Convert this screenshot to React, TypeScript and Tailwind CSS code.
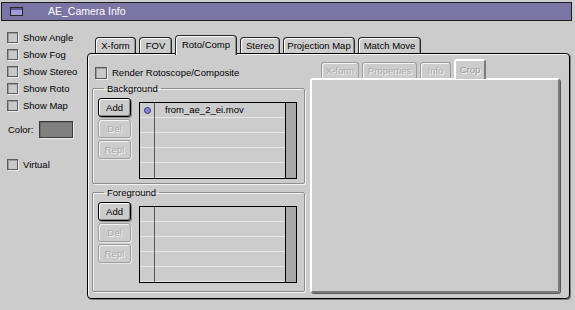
import React from "react";

function Box({ size = 11 }: { size?: number }) {
  return (
    <span
      className={
        (size === 12 ? "w-[12px] h-[12px] " : "w-[11px] h-[11px] ") +
        "shrink-0 border border-[#5c5c5c] bg-[#c9c9c9] shadow-[inset_1px_1px_0_#9c9c9c,1px_1px_0_#efefef]"
      }
    />
  );
}

function SideRow({ label }: { label: string }) {
  return (
    <div className="h-[17px] flex items-center">
      <Box />
      <span className="ml-[5px]">{label}</span>
    </div>
  );
}

function Tab({ label, w, active }: { label: string; w: string; active?: boolean }) {
  return (
    <div
      className={
        w +
        " border border-b-0 border-[#262626] rounded-t-[4px] shadow-[inset_1px_1px_0_#ffffff,inset_-1px_0_0_#8c8c8c] flex items-center justify-center " +
        (active ? "relative z-10 h-[20px] bg-[#cccccc] pb-[2px]" : "h-[16px] mb-[2px]")
      }
    >
      {label}
    </div>
  );
}

function SubTab({ label, w, active }: { label: string; w: string; active?: boolean }) {
  return (
    <div
      className={
        w +
        " rounded-t-[3px] flex items-center justify-center [text-shadow:1px_1px_0_#f2f2f2] " +
        (active
          ? "relative z-10 h-[20px] bg-[#cccccc] border-2 border-b-0 border-t-white border-l-white border-r-[#7a7a7a] text-[#9a9a9a] pb-[1px]"
          : "h-[16px] mb-[1px] border border-b-0 border-[#9c9c9c] shadow-[inset_1px_1px_0_#f4f4f4] text-[#adadad]")
      }
    >
      {label}
    </div>
  );
}

function Btn({ label, disabled }: { label: string; disabled?: boolean }) {
  return (
    <div
      className={
        "h-[19px] w-[33px] rounded-[3px] border flex items-center justify-center " +
        (disabled
          ? "border-[#9e9e9e] text-[#a9a9a9] [text-shadow:1px_1px_0_#f4f4f4] shadow-[inset_1px_1px_0_#f2f2f2,1px_1px_0_#e8e8e8]"
          : "border-black shadow-[inset_1px_1px_0_#ffffff,inset_-1px_-1px_0_#8a8a8a,1px_1px_0_#8a8a8a]")
      }
    >
      {label}
    </div>
  );
}

function ListBox({ item }: { item?: string }) {
  return (
    <div className="ml-[8px] w-[158px] h-[77px] border border-black flex">
      <div className="flex-1 flex [background-image:repeating-linear-gradient(to_bottom,transparent_0_14px,#e6e6e6_14px_15px)]">
        <div className="w-[15px] border-r border-[#5a5a5a] flex flex-col">
          {item && (
            <div className="h-[15px] flex items-center justify-center">
              <span className="w-[7px] h-[7px] rounded-full bg-[#8a82d2] border border-[#3a347c]" />
            </div>
          )}
        </div>
        <div className="flex-1 flex flex-col">
          {item && <div className="h-[14px] flex items-center pl-[10px]">{item}</div>}
        </div>
      </div>
      <div className="w-[11px] border-l border-black bg-[#a8a8a8]" />
    </div>
  );
}

function Group({ title, item, extra }: { title: string; item?: string; extra: string }) {
  return (
    <fieldset
      className={
        "border border-[#8e8e8e] rounded-[2px] px-[5px] pt-[4px] shadow-[inset_1px_1px_0_#f2f2f2,1px_1px_0_#f2f2f2] " +
        extra
      }
    >
      <legend className="ml-[6px] px-[3px] leading-[11px]">{title}</legend>
      <div className="flex items-start">
        <div className="flex flex-col gap-[2px]">
          <Btn label="Add" />
          <Btn label="Del" disabled />
          <Btn label="Repl" disabled />
        </div>
        <div className="mt-[4px]">
          <ListBox item={item} />
        </div>
      </div>
    </fieldset>
  );
}

export default function App() {
  return (
    <div className="w-[575px] h-[310px] bg-[#cccccc] overflow-hidden font-['Liberation_Sans',Arial,sans-serif] text-[9.5px] text-black leading-none flex flex-col">
      <div className="mt-[2px] ml-[1px] w-[571px] h-[19px] shrink-0 border border-[#1e1e1e] bg-[#7b75a5] flex items-center pl-[8px]">
        <div className="w-[13px] h-[9px] border border-[#262626] bg-[#a29dd8] shadow-[inset_0_2px_0_#5e5899]" />
        <span className="ml-[25px] text-white text-[10.5px]">AE_Camera Info</span>
      </div>
      <div className="flex flex-1">
        <div className="w-[87px] pl-[7px] pt-[8px] flex flex-col">
          <SideRow label="Show Angle" />
          <SideRow label="Show Fog" />
          <SideRow label="Show Stereo" />
          <SideRow label="Show Roto" />
          <SideRow label="Show Map" />
          <div className="mt-[7px] flex items-center">
            <span className="ml-[1px]">Color:</span>
            <span className="ml-[6px] w-[34px] h-[17px] border border-[#3a3a3a] bg-[#808080] shadow-[inset_1px_1px_0_#6a6a6a,1px_1px_0_#eeeeee]" />
          </div>
          <div className="mt-[18px]">
            <SideRow label="Virtual" />
          </div>
        </div>
        <div className="pt-[14px] flex flex-col">
          <div className="h-[20px] -mb-[2px] pl-[8px] flex items-end gap-[3px]">
            <Tab label="X-form" w="w-[41px]" />
            <Tab label="FOV" w="w-[33px]" />
            <Tab label="Roto/Comp" w="w-[62px]" active />
            <Tab label="Stereo" w="w-[40px]" />
            <Tab label="Projection Map" w="w-[72px]" />
            <Tab label="Match Move" w="w-[63px]" />
          </div>
          <div className="w-[483px] h-[246px] border border-black rounded-[4px] bg-[#cccccc] shadow-[inset_1px_1px_0_#f6f6f6,1px_1px_0_#7e7e7e] flex pt-[5px] pl-[4px] gap-[5px]">
            <div className="w-[213px] flex flex-col">
              <div className="mt-[8px] h-[12px] flex items-center pl-[3px]">
                <Box size={12} />
                <span className="ml-[5px]">Render Rotoscope/Composite</span>
              </div>
              <Group title="Background" item="from_ae_2_ei.mov" extra="mt-[4px] pb-[4px]" />
              <Group title="Foreground" extra="mt-[3px] pb-[8px]" />
            </div>
            <div className="w-[250px] flex flex-col">
              <div className="h-[20px] -mb-[1px] pl-[11px] flex items-end gap-[3px]">
                <SubTab label="X-form" w="w-[38px]" />
                <SubTab label="Properties" w="w-[55px]" />
                <SubTab label="Info" w="w-[31px]" />
                <SubTab label="Crop" w="w-[32px]" active />
              </div>
              <div className="h-[215px] border-2 border-t-white border-l-white border-r-[#7a7a7a] border-b-[#7a7a7a] rounded-[3px] shadow-[1px_1px_0_#5a5a5a]" />
            </div>
          </div>
        </div>
      </div>
    </div>
  );
}
